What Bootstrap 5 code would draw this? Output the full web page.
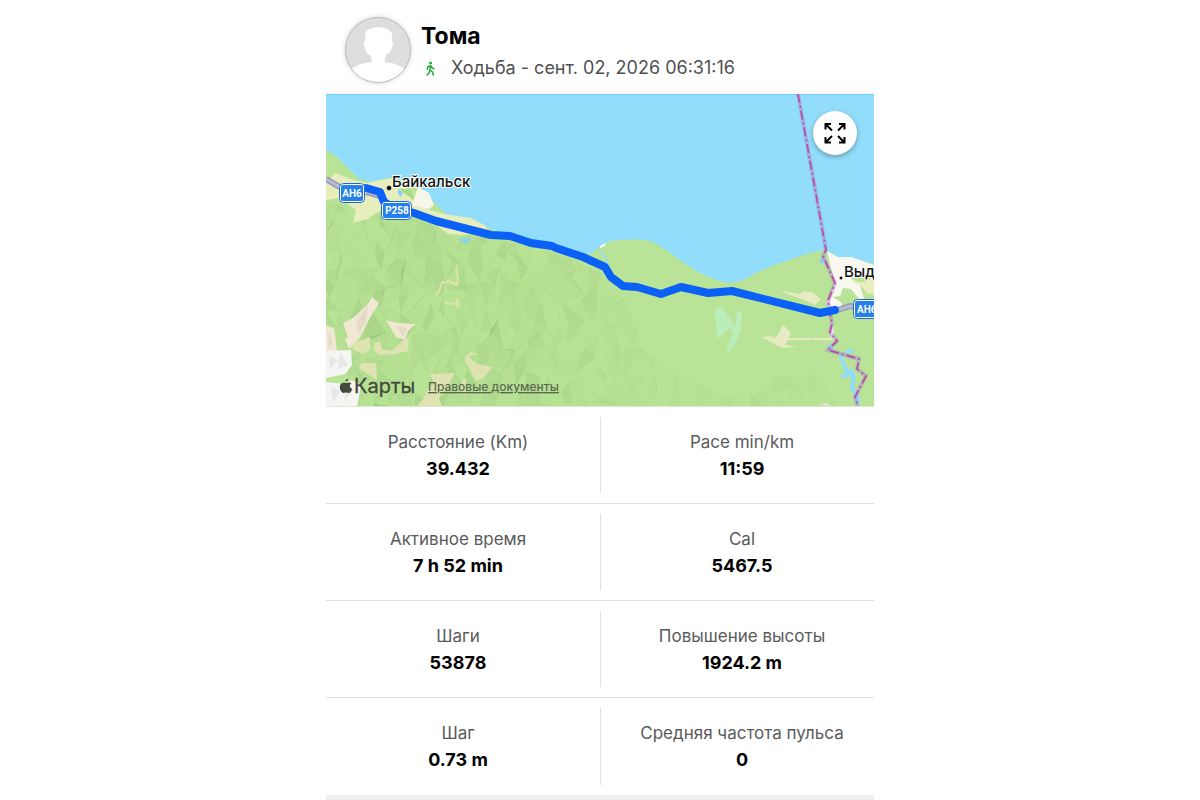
<!DOCTYPE html>
<html lang="ru">
<head>
<meta charset="utf-8">
<meta name="viewport" content="width=device-width, initial-scale=1">
<title>Тома – Ходьба</title>
<link href="https://cdn.jsdelivr.net/npm/bootstrap@5.3.0/dist/css/bootstrap.min.css" rel="stylesheet">
<style>
body { font-family: Inter, "Liberation Sans", sans-serif; color: #000; background: #fff; }
.activity { max-width: 548px; }
.profile { height: 94px; padding: 12px 16px 2px 19px; border-bottom: 4px solid #fafafa; }
.avatar { width: 66px; height: 66px; border: 1px solid #bcbcbc; box-shadow: 0 0 5px rgba(0,0,0,.18); background: #dedede; }
.intro { margin-left: 10px; }
.person { font-size: 23px; line-height: 32px; font-weight: 700; }
.detail { font-size: 18px; line-height: 24px; color: #505052; }
.map svg { display: block; width: 100%; height: auto; }
.map .expand { top: 17px; right: 17px; width: 44px; height: 44px; background: #fff; box-shadow: 0 2px 5px rgba(0,0,0,.3); }
.map .expand svg { width: 24px; height: 24px; }
.stats { margin: 0; }
.stat-row { height: 97px; padding: 10px 0; border-bottom: 1px solid #e0e0e0; }
.stat-row:last-child { border-bottom: 0; }
.stat { padding: 12px 10px 0 0; text-align: center; }
.stat + .stat { border-left: 1px solid #e0e0e0; padding: 12px 0 0 9px; }
.stat dt { font-weight: 400; font-size: 17px; line-height: 26px; color: #5a5a5c; }
.stat dd { font-weight: 700; font-size: 18px; line-height: 27px; margin: 0; }
.footer-band { height: 5px; background: #f0f0f0; }
</style>
</head>
<body>
<main class="activity mx-auto">
  <header class="profile d-flex align-items-center">
    <svg class="avatar rounded-circle flex-shrink-0" viewBox="0 0 64 64" role="img" aria-label="Тома">
      <path fill="#fff" d="M0 64V55Q10 45 25 44.500C27 43 25 39 24 37Q20 36 19 30L17.500 25L19.500 22C18 14 21 11 25 11C29 8 40 9 43 12C47 14 47 19 45.500 22L47 25C46 31 44 36 41 36C39 40 37 43 40 44.500Q54 45 64 55V64Z"/>
    </svg>
    <div class="intro flex-grow-1">
      <h1 class="person mt-0 mb-1">Тома</h1>
      <div class="detail d-flex align-items-center">
        <svg class="flex-shrink-0 me-2" width="22" height="22" viewBox="0 0 22 22" fill="none" stroke="#24ae31" stroke-width="1.500" stroke-linecap="round" stroke-linejoin="round" aria-hidden="true"><circle cx="9.500" cy="6" r="1" fill="#24ae31" stroke-width="1"/><path d="M9.300 8.800L6.500 10v2.500M9.300 8.800L9 13l2.500 2 .8 3M9 13l-1 3-2 2M9.800 8.800l1.500 2.200 1.700.8"/></svg>
        <span>Ходьба - сент. 02, 2026 06:31:16</span>
      </div>
    </div>
  </header>

  <section class="map position-relative" aria-label="Маршрут">
    <svg viewBox="0 0 548 313">
      <defs>
        <clipPath id="hills"><path d="M0 108L14 110 30 127 44 125 58 114 80 122 130 140 170 145 210 155 245 165 275 180 282 198 300 206 310 230 318 258 350 278 400 303 430 300 450 282 495 280 510 313H0Z"/></clipPath>
      </defs>
      <rect width="548" height="313" fill="#92ddfb"/>
      <rect width="548" height="1" fill="#77caf0"/>
      <path fill="#b9e396" d="M0 56L10 62 20 72 33 85 45 88 62 84 75 86 92 93 112 112 122 122 145 126 160 133 172 138 190 139 210 147 232 151 250 158 265 160 274 153 284 147 310 145 325 147 340 156 355 167 372 178 390 186 402 189 415 187 436 176 460 167 480 160 497 156 502 157 512 163 524 163 548 170V313H0Z"/>
      <g id="relief" clip-path="url(#hills)" shape-rendering="crispEdges"></g>
      <path fill="#e8edbd" d="M0 89L9 79 28 86 40 89 55 86 66 84 78 91 86 106 100 115 118 120 145 124 160 132 162 137 138 141 122 140 105 127 66 114 50 119 41 125 27 129 30 116 14 104 0 106Z"/>
      <path fill="#a9d986" d="M73 94L84 96 88 106 78 99Z"/>
      <path fill="#f8f5e9" d="M92 93L103 99 108 111 103 115 86 111Z"/>
      <path fill="#84d2f5" d="M72 95l5 3-2 5-3-3ZM132 145l13-1-4 6-4-2ZM494 165l5-3-1 6-4 2Z"/>
      <path fill="none" stroke="#92ddfb" stroke-width="1.500" d="M274 156l7 10 1 8"/>
      <path fill="#f0e8d3" d="M46 203L53 209 44 224 33 245 23 255 19 245 22 243 17 229 28 223 42 210ZM60 226L71 229 90 230 82 237 79 246 70 243ZM0 232L8 234 11 257 0 257Z"/>
      <path fill="#e5dac6" d="M42 211L40 226 33 241 30 228ZM70 232l12 2-5 9ZM3 238l4 12-5 4Z"/>
      <path fill="#f5f5f3" d="M0 257L25 256 26 271 18 282 35 291 31 313H0Z"/>
      <path fill="#e6e7e6" d="M3 261l9 6-8 7ZM14 259l8 12-10 4ZM5 291l9 7-7 10ZM20 292l7 4-9 12Z"/>
      <path fill="#b9e396" d="M0 284l20-4 10 4-12 6-18-2Z"/>
      <path fill="#dfe3b1" d="M90 313L97 305 103 293 108 290 104 280 129 279 122 291 113 304 116 313ZM33 271L36 269 50 269 51 286 34 275ZM27 249L33 247 44 243 44 256 37 260 27 255ZM48 249L54 247 56 255 66 257 76 247 83 244 82 257 68 260 54 261 48 257ZM139 263l5-5 8 2-10 2 9 8 15 3-8 11-8 3-7-14-4-5ZM136 286l4-2-1 18-4-4Z"/>
      <path fill="none" stroke="#dfe1ad" stroke-width="2" d="M109 201l4-3 3-10 4 1 2-2 9 4 1-8-2-6 1-6M119 209l11 1 2-6v10"/>
      <g fill="#e8ebc1"><path d="M455 197l8 1 10 2 5-3 8 1 9 7-6 6-16-7-12-4ZM436 243l8-1 6 2 7-13 8 8-3 5h24v2h-24l-3 5 12 2-15 1-11-6ZM487 244h22v2h-22Z"/></g>
      <path fill="#b9edb9" d="M389 217l6-6 9 14 6 7 1-15 5 1-1 18-5 12-7 10-3-1 7-18-3-5-13 11Z"/>
      <path fill="#f8f7f0" d="M501 157l11 6 13 0 23 8v7l-25 5 11 8 4 13-4 2-9-11-8-1-3 8-7 1 9 6-2 8-11 0-3-8 9-19-5-20Z"/>
      <path fill="#e8edbd" d="M525 187l14 1 9-5v18l-7-2-6-7Z"/>
      <path fill="#fff" d="M504 232l3 0 1 10-3 2ZM274 152l6-3-1 3-5 2Z"/>
      <path fill="#e8e5cc" d="M492 311l8-2 6 3Z"/>
      <path fill="none" stroke="#92ddfb" stroke-width="4" d="M514 261l7 17 7 4-2 12 6 9-1 10M515 282l8-1 3-6M520 258l7-1M502 251l5 6"/>
      <path fill="none" stroke="#9698b5" stroke-width="6" d="M0 85l12 7 8 3M40 98l15 4M512 216l12-4 9 1"/>
      <path fill="none" stroke="#b9bbd1" stroke-width="3" d="M0 85l12 7 8 3M40 98l15 4M512 216l12-4 9 1"/>
      <path fill="none" stroke="#a889d1" stroke-opacity=".5" stroke-width="4" d="M472 0L500 156 497 162 509 189 502 207 506 230 504 238 511 247 502 256 533 265 531 275 540 282 529 303 532 313"/>
      <path fill="none" stroke="#b84d9f" stroke-width="1.700" stroke-dasharray="9 3 2 3" d="M472 0L500 156 497 162 509 189 502 207 506 230 504 238 511 247 502 256 533 265 531 275 540 282 529 303 532 313"/>
      <path fill="none" stroke="#0b60f6" stroke-width="8" stroke-linecap="round" stroke-linejoin="round" d="M40 94L54 98 58 108 66 113 88 119 110 127 165 141 184 142 205 149 226 152 230 154 257 163 279 173 285 183 297 192 311 193 335 200 355 193 382 199 406 197 494 219 509 216"/>
      <g fill="#fff" stroke="#2367c8" stroke-width="1"><rect x="13.500" y="89.500" width="25" height="19" rx="4"/><rect x="55.500" y="107.500" width="30" height="18" rx="4"/><rect x="527.500" y="205.500" width="27" height="19" rx="4"/></g>
      <g fill="#2480ec"><rect x="15" y="91" width="22" height="16" rx="2"/><rect x="57" y="109" width="27" height="15" rx="2"/><rect x="529" y="207" width="24" height="16" rx="2"/></g>
      <g fill="#fff" font-family="Roboto, 'Liberation Sans', sans-serif" font-size="10" font-weight="700"><text x="26" y="103" text-anchor="middle">AH6</text><text x="71" y="120" text-anchor="middle">P258</text><text x="531" y="219">AH6</text></g>
      <circle cx="63" cy="94" r="2.500" stroke="#fff" stroke-opacity=".5"/><circle cx="515" cy="184" r="2" stroke="#fff"/>
      <g font-family="Inter, 'Liberation Sans', sans-serif" font-size="15" font-weight="500" fill="#111" stroke="#fff" stroke-width="2" stroke-linejoin="round" paint-order="stroke"><text x="66" y="93">Байкальск</text><text x="518" y="183">Выд</text></g>
      <path fill="#444a3b" d="M22.500 284.500q-.3 2.500-3 3 0-2.500 3-3ZM20 289c2 0 3-1.500 5.500.2-2.500 1.600-2 4.500.8 5.800-1 2.500-2.300 4-3.300 4-1 0-1.500-.6-2.800-.6s-1.800.6-2.700.6c-2 0-4.500-4-3.500-7.500 1-3.400 4-3.100 6-2.500Z"/>
      <text x="28" y="299" font-family="Inter, sans-serif" font-size="20" font-weight="400" fill="#42463b" stroke="#42463b" stroke-width=".3">Карты</text>
      <a href="#legal"><text x="102" y="297" font-family="Inter, sans-serif" font-size="12" font-weight="500" fill="#5b6850" text-decoration="underline">Правовые документы</text></a>
      <rect y="312" width="548" height="1" fill="#dce8d1"/>
    </svg>
    <button type="button" class="expand btn rounded-circle border-0 p-0 position-absolute d-flex align-items-center justify-content-center" aria-label="Развернуть карту">
      <svg viewBox="0 0 24 24" fill="none" stroke="#000" stroke-width="2"><path d="M2.500 8.500V3h5.500M3 3.500L9 9.500M16 3h5.500v5.500M21 3.500L15 9.500M2.500 16v5.500h5.500M3 21L9 15M16 21.500h5.500v-5.500M21 21L15 15"/></svg>
    </button>
  </section>

  <dl class="stats">
    <div class="stat-row row g-0"><div class="stat col-6"><dt>Расстояние (Km)</dt><dd>39.432</dd></div><div class="stat col-6"><dt>Pace min/km</dt><dd>11:59</dd></div></div>
    <div class="stat-row row g-0"><div class="stat col-6"><dt>Активное время</dt><dd>7 h 52 min</dd></div><div class="stat col-6"><dt>Cal</dt><dd>5467.5</dd></div></div>
    <div class="stat-row row g-0"><div class="stat col-6"><dt>Шаги</dt><dd>53878</dd></div><div class="stat col-6"><dt>Повышение высоты</dt><dd>1924.2 m</dd></div></div>
    <div class="stat-row row g-0"><div class="stat col-6"><dt>Шаг</dt><dd>0.73 m</dd></div><div class="stat col-6"><dt>Средняя частота пульса</dt><dd>0</dd></div></div>
  </dl>
  <div class="footer-band"></div>
</main>
<script src="https://cdn.jsdelivr.net/npm/bootstrap@5.3.0/dist/js/bootstrap.bundle.min.js"></script>
<script>
// Hill relief: a jittered triangle mesh, each face shaded by its slope.
// The seed keeps the hills the same on each load.
let seed = 17;
const rnd = () => (seed = (seed * 16807) % 2147483647) / 2147483647;
const relief = document.getElementById('relief');
const dx = 10, dy = 15, cols = 53, rows = 16, pts = [];
for (let r = 0; r <= rows; r++) {
  pts.push([]);
  for (let c = 0; c <= cols; c++) {
    pts[r].push({
      x: c * dx - 10 + (rnd() - .5) * 13 + (r % 2) * 5,
      y: r * dy + 95 + (rnd() - .5) * 20,
      z: rnd()
    });
  }
}
const face = (a, b, c) => {
  const slope = (b.z - a.z) + (c.z - a.z) * .5;
  const fade = a.x > 170 ? Math.max(.3, 1 - (a.x - 170) / 230) : 1;
  const p = document.createElementNS('http://www.w3.org/2000/svg', 'path');
  p.setAttribute('d', `M${a.x} ${a.y}L${b.x} ${b.y}L${c.x} ${c.y}Z`);
  p.setAttribute('fill', slope > 0 ? '#5f8f48' : '#a5dc7c');
  p.setAttribute('fill-opacity', (Math.min(1, Math.abs(slope)) * (slope > 0 ? .12 : .2) + .03) * fade);
  relief.append(p);
};
for (let r = 0; r < rows; r++) {
  for (let c = 0; c < cols; c++) {
    const a = pts[r][c], b = pts[r][c + 1], d = pts[r + 1][c], e = pts[r + 1][c + 1];
    if (rnd() < .6) { face(a, b, d); face(d, b, e); }
    else { face(a, b, e); face(d, a, e); }
  }
}
</script>
</body>
</html>
